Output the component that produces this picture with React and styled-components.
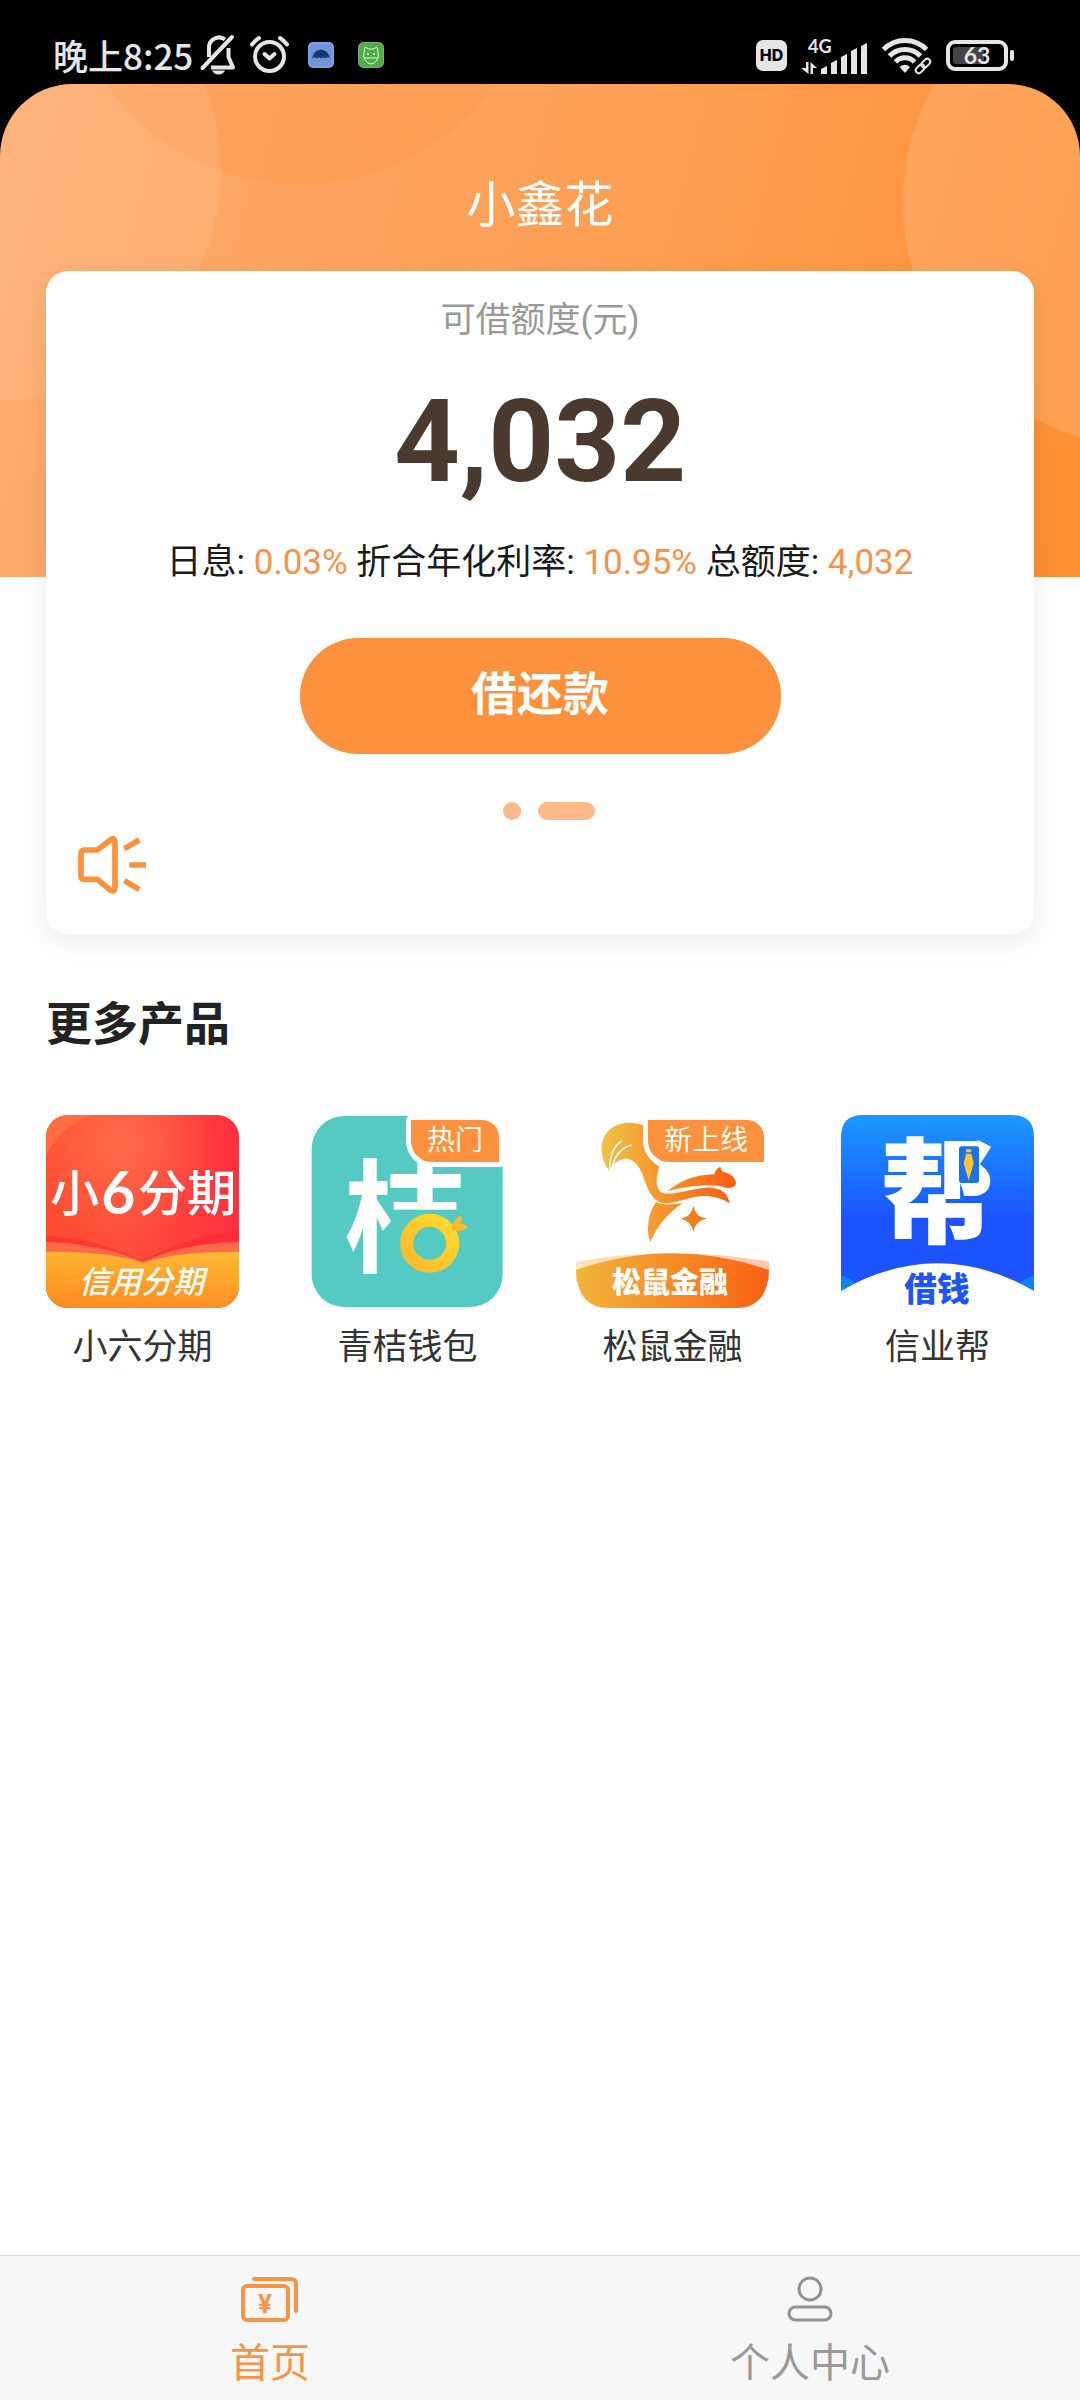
import React from 'react';
import styled, { createGlobalStyle } from 'styled-components';

const ORANGE = '#fd913d';
const FONT = "Roboto, 'Noto Sans CJK SC', sans-serif";
const CJK = "'Noto Sans CJK SC', sans-serif";

/* ---------- status bar icons ---------- */

const BellOff = () => (
  <svg width="35" height="40" viewBox="0 0 35 40" fill="none" stroke="#e6e6e6" strokeWidth="4">
    <path d="M8 22V13A10 10 0 0 1 24 4.500" />
    <path d="M27.500 13V22L32 32.500H10" strokeLinejoin="round" />
    <path d="M1.500 33L31 2" strokeLinecap="round" />
    <path d="M11 35.500H24Q22 39.500 17.500 39.500T11 35.500Z" fill="#e6e6e6" stroke="none" />
  </svg>
);

const Alarm = () => (
  <svg width="39" height="38" viewBox="0 0 39 38" fill="none" stroke="#e6e6e6" strokeWidth="4" strokeLinecap="round">
    <circle cx="19.500" cy="20.500" r="14.500" />
    <path d="M14.500 18L19.500 22.500L24.500 18" strokeLinejoin="round" />
    <path d="M2 8.500Q5 4.500 9 2M37 8.500Q34 4.500 30 2" />
  </svg>
);

const UmbrellaApp = () => (
  <svg width="36" height="28" viewBox="0 0 36 28">
    <rect x="5" y="1" width="26" height="26" rx="5" fill="#6f97d8" />
    <rect x="6" y="2" width="24" height="24" rx="4" fill="none" stroke="#a9c0e8" strokeDasharray="1 1" />
    <path d="M9 18Q10 9.500 18 8.500Q26 9.500 27 18Q25 15 22.500 17.500Q20 15.500 18 17.500Q16 15.500 13.500 17.500Q11 15 9 18Z" fill="#123a70" />
  </svg>
);

const CatApp = () => (
  <svg width="36" height="28" viewBox="0 0 36 28">
    <rect x="5.500" y="1.500" width="25" height="25" rx="5" fill="#4fae43" stroke="#8fa394" />
    <path d="M11 12L12 6L16 8H20L24 6L25 12Q27 15 24 19T18 23T12 19T11 12ZM11 17H25" fill="none" stroke="#e3f5df" />
    <circle cx="15" cy="13" r="1" fill="#e3f5df" />
    <circle cx="21" cy="13" r="1" fill="#e3f5df" />
  </svg>
);

const HdBadge = () => (
  <svg width="31" height="31" viewBox="0 0 31 31">
    <rect width="31" height="31" rx="7" fill="#e6e6e6" />
    <text x="15.500" y="21" textAnchor="middle" fontFamily="Inter, sans-serif" fontWeight="800" fontSize="16" fill="#000">HD</text>
  </svg>
);

const Signal = () => (
  <svg width="67" height="44" viewBox="0 -6 67 44" fill="#e6e6e6">
    <text x="7" y="14" fontFamily="Lato, sans-serif" fontWeight="700" fontSize="18">4G</text>
    <path d="M5 23H7.500V35L0 29H5ZM9.500 35V23L16 29H12V35Z" />
    <path d="M20 30L26 27V35H20ZM30 24L36 21V35H30ZM40 18L46 15V35H40ZM50 12L56 9V35H50ZM60 7L66 4V35H60Z" />
  </svg>
);

const Wifi = () => (
  <svg width="50" height="38" viewBox="0 0 50 38" fill="none" stroke="#e6e6e6">
    <path d="M1.500 13.500A30 30 0 0 1 44.500 13.500M7.500 20A21.500 21.500 0 0 1 38.500 20M13.500 26A13 13 0 0 1 32.500 26" strokeWidth="5" />
    <path d="M17.500 31Q23 26.500 28 31L23 37Z" fill="#e6e6e6" stroke="none" />
    <g transform="rotate(-45 41 30)">
      <rect x="31" y="25" width="20" height="10" fill="#000" stroke="none" />
      <rect x="32" y="27" width="10" height="6" rx="3" strokeWidth="2" />
      <rect x="40" y="27" width="10" height="6" rx="3" strokeWidth="2" />
    </g>
  </svg>
);

const Battery = () => (
  <svg width="68" height="31" viewBox="0 0 68 31">
    <rect x="2" y="2" width="58" height="27" rx="7" fill="none" stroke="#e6e6e6" strokeWidth="4" />
    <rect x="7" y="7" width="31" height="17" rx="3" fill="#444" />
    <rect x="64" y="10" width="4" height="11" rx="2" fill="#e6e6e6" />
    <text x="31" y="24" textAnchor="middle" fontFamily="Lato, sans-serif" fontWeight="700" fontSize="23" fill="#e6e6e6">63</text>
  </svg>
);

/* ---------- page icons ---------- */

const Speaker = () => (
  <svg width="68" height="58" viewBox="0 0 204 174" fill="none" stroke={ORANGE} strokeWidth="17">
    <path d="M20 42H58L98 11Q111 4 111 20V154Q111 170 98 163L58 130H20Q9 130 9 119V53Q9 42 20 42Z" />
    <path d="M139 38L184 12M154 87H204M139 134L184 161" />
  </svg>
);

const HomeIcon = () => (
  <svg width="58" height="46" viewBox="0 0 58 46" fill="none" stroke="#f99446" strokeWidth="4" strokeLinecap="round">
    <rect x="2" y="10" width="45" height="34" rx="4" />
    <path d="M13 3H50Q55 3 55 8V35" />
    <text x="24" y="37" textAnchor="middle" fontFamily="Roboto, sans-serif" fontWeight="700" fontSize="26" fill="#f99446" stroke="none">¥</text>
  </svg>
);

const UserIcon = () => (
  <svg width="46" height="46" viewBox="0 0 46 46" fill="none" stroke="#919191" strokeWidth="3">
    <circle cx="23" cy="13" r="11" />
    <rect x="2" y="31" width="42" height="13" rx="6.500" />
  </svg>
);

/* ---------- product logos ---------- */

const XiaoliuLogo = () => (
  <svg viewBox="0 0 579 579">
    <defs>
      <linearGradient id="xl-red" x1="0" y1="0" x2="1" y2="0">
        <stop offset="0" stopColor="#ff4b2f" />
        <stop offset="0.400" stopColor="#ff4f3b" />
        <stop offset="1" stopColor="#ff3040" />
      </linearGradient>
      <radialGradient id="xl-glow" cx="0.380" cy="0.150" r="0.500">
        <stop offset="0" stopColor="#ff6a48" />
        <stop offset="1" stopColor="#ff6a48" stopOpacity="0" />
      </radialGradient>
      <linearGradient id="xl-gold" x1="0.700" y1="0" x2="0.500" y2="1">
        <stop offset="0" stopColor="#ffb836" />
        <stop offset="1" stopColor="#ff8d20" />
      </linearGradient>
      <clipPath id="xl-clip"><rect width="579" height="579" rx="66" /></clipPath>
    </defs>
    <g clipPath="url(#xl-clip)">
      <rect width="579" height="579" fill="url(#xl-red)" />
      <rect width="579" height="579" fill="url(#xl-glow)" />
      <path d="M0 120Q40 40 140 0H0Z" fill="#ff6d42" />
      <path d="M0 360Q190 380 290 442Q400 370 579 345V579H0Z" fill="#ff2a33" opacity="0.600" />
      <path d="M0 380Q180 388 290 442Q400 385 579 380V579H0Z" fill="#ff6a48" />
      <path d="M0 410Q190 408 290 443Q400 408 579 410V579H0Z" fill="url(#xl-gold)" />
    </g>
    <g fill="#fff" fontFamily={CJK} fontWeight="500">
      <text x="12" y="288" fontSize="148">小</text>
      <text x="166" y="298" fontSize="176" fontFamily="Lato, sans-serif" fontWeight="700">6</text>
      <text x="275" y="288" fontSize="148">分期</text>
      <text x="286" y="534" fontSize="94" fontStyle="italic" textAnchor="middle">信用分期</text>
    </g>
  </svg>
);

const QingjuLogo = () => (
  <svg viewBox="0 0 579 579">
    <defs>
      <linearGradient id="qj-ring" x1="1" y1="0" x2="0" y2="1">
        <stop offset="0" stopColor="#ffd92f" />
        <stop offset="1" stopColor="#ffb92c" />
      </linearGradient>
    </defs>
    <rect x="2" y="3" width="573" height="573" rx="98" fill="#55cac3" />
    <text x="98" y="440" fontSize="366" fontWeight="700" fontFamily={CJK} fill="#fff">桔</text>
    <rect x="243" y="284" width="219" height="200" fill="#55cac3" />
    <circle cx="356" cy="385" r="69" fill="none" stroke="url(#qj-ring)" strokeWidth="39" />
    <path d="M422 345Q426 308 450 302Q455 314 451 326Q463 326 471 337Q452 354 422 345Z" fill="#ffb92c" />
  </svg>
);

const SquirrelLogo = () => (
  <svg viewBox="0 0 579 579">
    <defs>
      <linearGradient id="sq-fill" gradientUnits="userSpaceOnUse" x1="130" y1="0" x2="530" y2="0">
        <stop offset="0" stopColor="#f3bf45" />
        <stop offset="0.500" stopColor="#f58f2a" />
        <stop offset="1" stopColor="#fa5c12" />
      </linearGradient>
      <linearGradient id="sq-base" x1="0" y1="0" x2="1" y2="0">
        <stop offset="0" stopColor="#f2b43a" />
        <stop offset="0.500" stopColor="#f68c27" />
        <stop offset="1" stopColor="#fa6014" />
      </linearGradient>
    </defs>
    <g transform="translate(-50 -75)" fill="url(#sq-fill)">
      <path d="M152 245C120 205 118 150 150 120C180 92 225 95 260 108C252 170 270 215 300 230C290 262 286 296 308 308C340 318 390 296 440 293C482 290 508 310 510 340C480 318 440 315 410 320C370 328 335 343 305 338C275 328 262 290 250 255C240 225 215 200 190 208C165 215 155 230 152 245Z" />
      <path d="M325 303C360 275 400 255 465 253C468 240 476 232 483 231C485 238 488 244 492 246C515 250 530 265 530 280C528 292 515 296 500 293C460 280 400 285 325 303Z" />
      <path d="M290 337C320 348 350 342 370 340C330 365 295 405 273 455C262 430 262 375 290 337Z" />
      <path d="M402 347Q408 380 442 386Q408 392 402 425Q396 392 363 386Q396 380 402 347Z" />
      <path d="M152 242C148 205 162 168 188 152M160 228C165 198 188 172 216 165" fill="none" stroke="#fff" strokeWidth="5" />
    </g>
    <path d="M0 440Q290 390 579 440V500H0Z" fill="url(#sq-base)" opacity="0.350" />
    <path d="M0 465Q290 365 579 465Q575 579 480 579H98Q4 579 0 465Z" fill="url(#sq-base)" />
    <text x="282" y="533" fontSize="87" fontWeight="900" textAnchor="middle" fontFamily={CJK} fill="#fff">松鼠金融</text>
  </svg>
);

const XinyeLogo = () => (
  <svg viewBox="0 0 579 579">
    <defs>
      <linearGradient id="xy-blue" x1="0" y1="0" x2="0" y2="1">
        <stop offset="0" stopColor="#1c98ff" />
        <stop offset="0.600" stopColor="#1b53ff" />
        <stop offset="1" stopColor="#1b53ff" />
      </linearGradient>
    </defs>
    <path d="M0 66Q0 0 66 0H513Q579 0 579 66V527Q290 363 0 527Z" fill="url(#xy-blue)" />
    <path d="M0 482Q20 484 42 504L0 527ZM579 482Q559 484 537 504L579 527Z" fill="#0d84ff" />
    <text x="289" y="358" fontSize="340" fontWeight="900" textAnchor="middle" fontFamily={CJK} fill="#fff">帮</text>
    <rect x="354" y="94" width="60" height="110" rx="8" fill="#1c72e8" />
    <path d="M375 103H391V112H375ZM375 116H391L398 145L383 197L368 145Z" fill="#fcc533" />
    <text x="288" y="557" fontSize="98" fontWeight="900" textAnchor="middle" fontFamily={CJK} fill="#1e56f5">借钱</text>
  </svg>
);

const products = [
  { name: '小六分期', Logo: XiaoliuLogo },
  { name: '青桔钱包', Logo: QingjuLogo, badge: '热门' },
  { name: '松鼠金融', Logo: SquirrelLogo, badge: '新上线' },
  { name: '信业帮', Logo: XinyeLogo },
];

const App = () => (
  <Page>
    <GlobalStyle />
    <StatusBar>
      <StatusGroup>
        <Time>晚上8:25</Time>
        <BellOff />
        <Alarm />
        <UmbrellaApp />
        <CatApp />
      </StatusGroup>
      <StatusGroup>
        <HdBadge />
        <Signal />
        <Wifi />
        <Battery />
      </StatusGroup>
    </StatusBar>
    <Main>
      <Title>小鑫花</Title>
      <Card>
        <CardLabel>可借额度(元)</CardLabel>
        <Amount>4,032</Amount>
        <Rates>
          日息: <Rate>0.03%</Rate> 折合年化利率: <Rate>10.95%</Rate> 总额度: <Rate>4,032</Rate>
        </Rates>
        <LoanButton type="button">借还款</LoanButton>
        <Dots>
          <Dot />
          <Dot $wide />
        </Dots>
        <Notice>
          <Speaker />
        </Notice>
      </Card>
      <SectionTitle>更多产品</SectionTitle>
      <Products>
        {products.map(({ name, Logo, badge }) => (
          <Product key={name} href="#">
            <LogoBox>
              <Logo />
              {badge && <Badge>{badge}</Badge>}
            </LogoBox>
            <ProductName>{name}</ProductName>
          </Product>
        ))}
      </Products>
    </Main>
    <TabBar>
      <Tab href="#" $active>
        <HomeIcon />
        <TabLabel>首页</TabLabel>
      </Tab>
      <Tab href="#">
        <UserIcon />
        <TabLabel>个人中心</TabLabel>
      </Tab>
    </TabBar>
  </Page>
);

const GlobalStyle = createGlobalStyle`
  * {
    box-sizing: border-box;
  }

  body {
    margin: 0;
    background: #000;
    font-family: ${FONT};
  }

  svg {
    display: block;
    flex-shrink: 0;
    overflow: visible;
  }
`;

const Page = styled.div`
  display: flex;
  flex-direction: column;
  min-height: 100vh;
`;

const StatusBar = styled.header`
  display: flex;
  justify-content: space-between;
  padding: 28px 66px 2px 53px;
  height: 84px;
`;

const StatusGroup = styled.div`
  display: flex;
  align-items: center;
  gap: 14px;
`;

const Time = styled.time`
  margin-right: -6px;
  font-family: ${CJK};
  font-size: 35px;
  font-weight: 500;
  line-height: 40px;
  color: #e6e6e6;
`;

const Main = styled.main`
  flex: 1;
  padding: 92px 46px 40px;
  border-radius: 72px 72px 0 0;
  background-color: #fff;
  background-image:
    radial-gradient(circle 233px at -11px 86px, rgba(255, 255, 255, 0.08) 99%, transparent 100%),
    radial-gradient(circle 239px at 300px -137px, rgba(250, 145, 60, 0.25) 99%, transparent 100%),
    radial-gradient(circle 244px at calc(100% + 66px) 119px, rgba(255, 255, 255, 0.14) 99%, transparent 100%),
    linear-gradient(105deg, #ffad72 0%, #fda662 25%, #fd9f53 55%, #fd943d 85%, #fd8f33 100%);
  background-size: 100% 493px;
  background-repeat: no-repeat;
`;

const Title = styled.h1`
  margin: 0 0 35px;
  font-size: 49px;
  font-weight: 400;
  line-height: 60px;
  text-align: center;
  color: #fff;
`;

const Card = styled.section`
  display: flex;
  flex-direction: column;
  align-items: center;
  padding: 29px 32px 40px;
  border-radius: 22px;
  background: #fff;
  box-shadow: 0 8px 28px rgba(0, 0, 0, 0.08);
`;

const CardLabel = styled.div`
  font-size: 35px;
  line-height: 42px;
  color: #999;
`;

const Amount = styled.div`
  margin: 40px 0;
  font-size: 115px;
  font-weight: 700;
  line-height: 120px;
  color: #4a392e;
`;

const Rates = styled.div`
  font-size: 35px;
  line-height: 42px;
  color: #1a1a1a;
`;

const Rate = styled.span`
  color: #f5934a;
`;

const LoanButton = styled.button`
  width: 481px;
  max-width: 100%;
  height: 116px;
  margin-top: 54px;
  padding: 0 0 12px;
  border: 0;
  border-radius: 58px;
  background: ${ORANGE};
  font-family: inherit;
  font-size: 46px;
  font-weight: 700;
  color: #fff;
`;

const Dots = styled.div`
  display: flex;
  margin-top: 48px;
`;

const Dot = styled.span`
  width: ${({ $wide }) => ($wide ? 57 : 18)}px;
  height: 18px;
  margin-left: 17px;
  border-radius: 9px;
  background: #fdbb8b;
`;

const Notice = styled.div`
  align-self: flex-start;
  margin-top: 16px;
`;

const SectionTitle = styled.h2`
  margin: 60px 0 61px;
  font-size: 46px;
  font-weight: 700;
  line-height: 60px;
  color: #222;
`;

const Products = styled.div`
  display: flex;
  justify-content: space-between;
`;

const Product = styled.a`
  width: 193px;
  text-decoration: none;
`;

const LogoBox = styled.div`
  position: relative;
`;

const Badge = styled.span`
  position: absolute;
  top: 0;
  right: 0;
  padding: 0 16px;
  border: 5px solid #fff;
  border-radius: 6px 22px 4px 26px;
  background: ${ORANGE};
  font-size: 28px;
  line-height: 42px;
  color: #fffaf0;
`;

const ProductName = styled.div`
  margin-top: 19px;
  font-size: 35px;
  line-height: 42px;
  text-align: center;
  color: #333;
`;

const TabBar = styled.nav`
  display: flex;
  border-top: 1px solid #d9d9d9;
  background: #f7f7f7;
`;

const Tab = styled.a`
  display: flex;
  flex: 1;
  flex-direction: column;
  align-items: center;
  gap: 17px;
  padding: 20px 0 11px;
  text-decoration: none;
  color: ${({ $active }) => ($active ? '#f99446' : '#999')};
`;

const TabLabel = styled.span`
  font-size: 40px;
  line-height: 50px;
`;

export default App;
